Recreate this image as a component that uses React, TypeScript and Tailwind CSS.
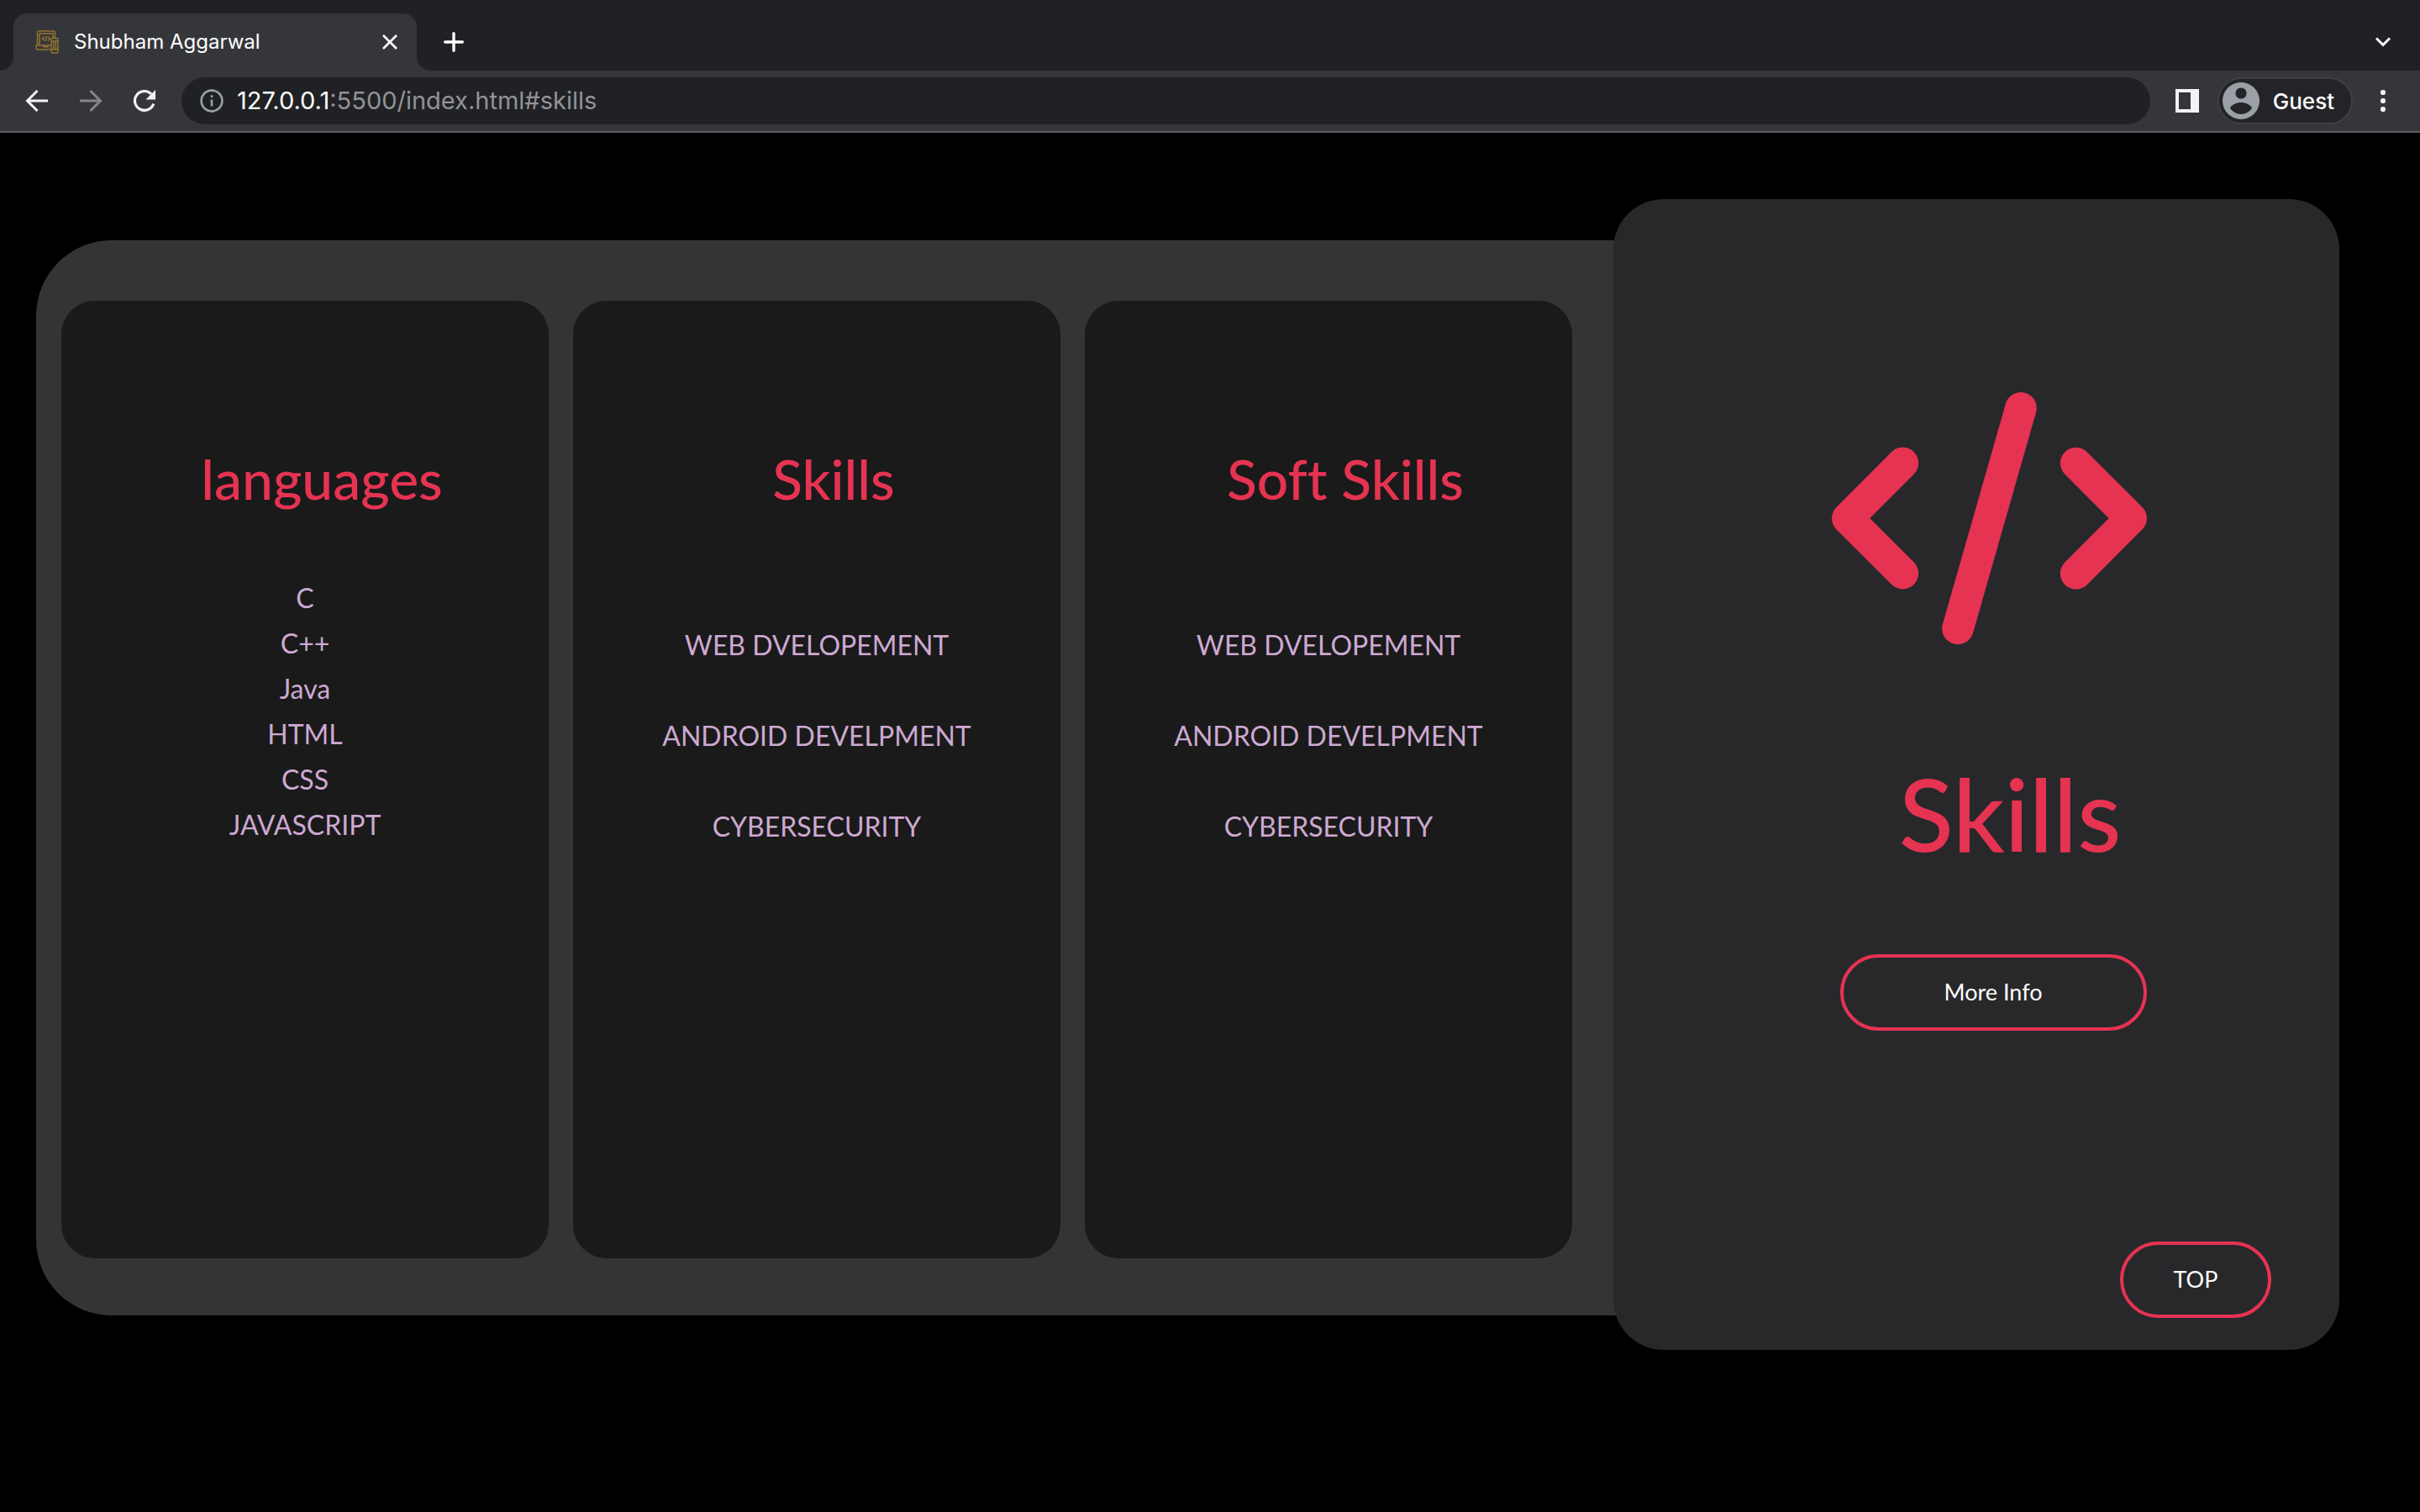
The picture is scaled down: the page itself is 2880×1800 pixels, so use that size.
import { FaCode } from "react-icons/fa6";

const cards = [
  { title: "languages", items: ["C", "C++", "Java", "HTML", "CSS", "JAVASCRIPT"], spaced: false },
  { title: "Skills", items: ["WEB DVELOPEMENT", "ANDROID DEVELPMENT", "CYBERSECURITY"], spaced: true },
  { title: "Soft Skills", items: ["WEB DVELOPEMENT", "ANDROID DEVELPMENT", "CYBERSECURITY"], spaced: true },
];

function Favicon() {
  return (
    <svg viewBox="0 0 28 28" className="size-7 shrink-0 text-[#94752e]" fill="none" stroke="currentColor" strokeWidth="1.5">
      <path d="M2.500 18V3a2 2 0 0 1 2-2h17a2 2 0 0 1 2 2v6" />
      <path d="M5 17V4h16v5M1 18h17M1 18v3a2 2 0 0 0 2 2h15M9 18.500c1 2 6 2 7 0" />
      <path d="M11 7.500 8.500 10l2.500 2.500M15 7.500l2.500 2.500-2.500 2.500M13.500 7l-1 6" />
      <path d="M20.500 9.500h5a1.500 1.500 0 0 1 1.500 1.500v14.500a1.500 1.500 0 0 1-1.500 1.500h-5a1.500 1.500 0 0 1-1.500-1.500V11a1.500 1.500 0 0 1 1.500-1.500zM19 13h8M19 23h8M21.700 13v10M24.300 13v10" />
    </svg>
  );
}

function BrowserChrome() {
  return (
    <header className="border-b-2 border-[#5f6063] bg-[#35363a] font-['Inter',sans-serif] text-white">
      <div className="flex h-[84px] items-stretch bg-[#202124] pt-4">
        <div className="flex w-4 items-stretch bg-[#35363a]">
          <div className="flex-1 rounded-br-2xl bg-[#202124]" />
        </div>
        <div className="flex w-[480px] items-center rounded-t-2xl bg-[#35363a] pr-5 pl-[26px]">
          <Favicon />
          <span className="ml-[18px] flex-1 text-2xl">Shubham Aggarwal</span>
          <button aria-label="Close tab" className="flex size-6 items-center justify-center">
            <svg viewBox="0 0 18 18" className="size-[18px]" stroke="currentColor" strokeWidth="2.600">
              <path d="M1 1l16 16M17 1 1 17" />
            </svg>
          </button>
        </div>
        <div className="flex flex-1 bg-[#35363a]">
          <div className="flex flex-1 items-center justify-between rounded-bl-2xl bg-[#202124] pr-[35px] pl-8">
            <button aria-label="New tab">
              <svg viewBox="0 0 24 24" className="size-6" stroke="currentColor" strokeWidth="3.400" strokeLinecap="round">
                <path d="M12 1.700v20.600M1.700 12h20.600" />
              </svg>
            </button>
            <button aria-label="Search tabs">
              <svg viewBox="0 0 18 12" className="h-3 w-[18px]" fill="none" stroke="currentColor" strokeWidth="3">
                <path d="M1 1.500l8 8 8-8" />
              </svg>
            </button>
          </div>
        </div>
      </div>

      <div className="flex h-[72px] items-center pr-[38px] pl-[30px]">
        <button aria-label="Back">
          <svg viewBox="0 0 28 28" className="size-7" fill="none" stroke="#f1f3f4" strokeWidth="3">
            <path d="M27 14H3M14.500 2 2.500 14l12 12" />
          </svg>
        </button>
        <button aria-label="Forward" className="ml-9">
          <svg viewBox="0 0 28 28" className="size-7" fill="none" stroke="#85868a" strokeWidth="3">
            <path d="M1 14h24M13.500 2l12 12-12 12" />
          </svg>
        </button>
        <button aria-label="Reload" className="ml-9">
          <svg viewBox="0 0 28 28" className="size-7" fill="none" stroke="#f1f3f4" strokeWidth="3.200">
            <path d="M24.700 17.500A11.400 11.400 0 1 1 22 5.900" />
            <path d="M27 1v11.500H15.500z" fill="#f1f3f4" stroke="none" />
          </svg>
        </button>
        <div className="ml-[30px] flex h-14 flex-1 items-center rounded-full bg-[#202124] pl-[22px]">
          <svg viewBox="0 0 28 28" className="size-7" fill="none" stroke="#9aa0a6" strokeWidth="2.600">
            <circle cx="14" cy="14" r="12.400" />
            <path d="M14 12.500v8M14 7.300v2.800" />
          </svg>
          <a href="#skills" className="ml-4 text-[29px] text-[#929397]">
            <span className="text-white">127.0.0.1</span>:5500/index.html#skills
          </a>
        </div>
        <button aria-label="Side panel" className="ml-[30px]">
          <svg viewBox="0 0 28 28" className="size-7">
            <path fill="#f1f3f4" fillRule="evenodd" d="M0 0h28v28H0zM4 4v20h14V4z" />
          </svg>
        </button>
        <button className="ml-[22px] flex h-14 items-center gap-4 rounded-full border-2 border-[#3f3f44] bg-[#242428] pr-5 pl-1 text-[26px] font-medium">
          <svg viewBox="0 0 44 44" className="size-11">
            <circle cx="22" cy="22" r="22" fill="#9aa0a6" />
            <circle cx="22" cy="13" r="6.600" fill="#242428" />
            <path d="M9 30.500c2-4 8-6.500 13-6.500s11 2.500 13 6.500c-2 4-8 7.500-13 7.500S11 34.500 9 30.500z" fill="#242428" />
          </svg>
          Guest
        </button>
        <button aria-label="Menu" className="ml-[30px]">
          <svg viewBox="0 0 12 28" className="h-7 w-3" fill="#f1f3f4">
            <circle cx="6" cy="4" r="3.100" />
            <circle cx="6" cy="14" r="3.100" />
            <circle cx="6" cy="24" r="3.100" />
          </svg>
        </button>
      </div>
    </header>
  );
}

export default function App() {
  return (
    <div className="min-h-screen bg-black">
      <BrowserChrome />
      <main
        id="skills"
        className="flex items-start pt-[79px] pr-24 pl-[43px] font-['Lato',sans-serif] [font-variant-ligatures:none]"
      >
        <section className="mt-[49px] grid flex-1 grid-cols-3 gap-[29px] rounded-l-[90px] bg-[#343434] pt-[72px] pr-[109px] pb-[68px] pl-[30px]">
          {cards.map((card) => (
            <article key={card.title} className="min-h-[1140px] rounded-[40px] bg-[#1a1a1a] pt-[172px] text-center">
              <h2 className="pl-10 text-[66px] leading-[80px] font-medium text-[#e63352]">{card.title}</h2>
              {card.spaced ? (
                <ul className="mt-[131px] space-y-[54px] text-[32px] leading-[54px] text-[#cda9d2]">
                  {card.items.map((item) => (
                    <li key={item}>{item}</li>
                  ))}
                </ul>
              ) : (
                <ul className="mt-[75px] text-[32px] leading-[54px] text-[#cda9d2]">
                  {card.items.map((item) => (
                    <li key={item}>{item}</li>
                  ))}
                </ul>
              )}
            </article>
          ))}
        </section>

        <aside className="relative -ml-[60px] flex min-h-[1370px] w-[864px] flex-col items-center rounded-[60px] bg-[#28282b] pt-[230px] pb-[38px]">
          <FaCode className="ml-[30px] h-[300px] w-[375px] text-[#e63352]" />
          <h1 className="mt-[131px] ml-20 text-[120px] leading-[140px] font-medium text-[#e63352]">Skills</h1>
          <button className="mt-[98px] ml-10 h-[91px] w-[365px] rounded-full border-4 border-[#e63352] text-[27px] text-white">
            More Info
          </button>
          <button className="mt-auto mr-[81px] h-[91px] w-[180px] self-end rounded-full border-4 border-[#e63352] text-[27px] text-white">
            TOP
          </button>
        </aside>
      </main>
    </div>
  );
}
